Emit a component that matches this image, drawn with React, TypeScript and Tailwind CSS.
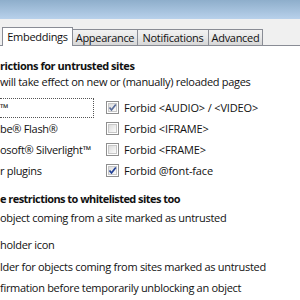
import React from 'react'

type BoxProps = {
    checked?: boolean
    tone?: string
}

const Box = ({ checked, tone = '#2b4c9a' }: BoxProps) => (
    <span className="relative inline-flex h-[13px] w-[13px] shrink-0 border border-[#8f8f8f] bg-white p-px">
        <span className="h-full w-full border border-[#c8c8c8] bg-gradient-to-br from-[#dcdcdc] to-[#fbfbfb]" />
        {checked && (
            <svg className="absolute left-[1px] top-[1px]" width="9" height="9" viewBox="0 0 9 9">
                <path d="M1.5 4.5 L3.5 7 L7.8 1.5" fill="none" stroke={tone} strokeWidth="1.7" />
            </svg>
        )}
    </span>
)

const tabs = [
    { label: 'Embeddings', w: 'w-[71px]' },
    { label: 'Appearance', w: 'w-[65px]' },
    { label: 'Notifications', w: 'w-[71px]' },
    { label: 'Advanced', w: 'w-[54px]' },
]

const rows = [
    { left: '™', right: 'Forbid <AUDIO> / <VIDEO>', checked: true, tone: '#5a6d9a', focus: true },
    { left: 'be® Flash®', right: 'Forbid <IFRAME>', checked: false },
    { left: 'osoft® Silverlight™', right: 'Forbid <FRAME>', checked: false },
    { left: 'r plugins', right: 'Forbid @font-face', checked: true, tone: '#1f3f96' },
]

export default function App() {
    return (
        <div
            className="flex h-[300px] w-[300px] flex-col overflow-hidden bg-[#f0f0f0] text-[11px] leading-[16px] tracking-[-0.3px] text-[#111]"
            style={{ fontFamily: '"Segoe UI", "Open Sans", "Noto Sans", sans-serif' }}
        >
            <div className="h-[19px] shrink-0 bg-gradient-to-b from-[#8eaecb] to-[#b8d1eb]" />
            <div className="flex h-[26px] shrink-0 items-end pl-[2px]">
                {tabs.map((t, i) =>
                    i === 0 ? (
                        <div
                            key={t.label}
                            className={`relative z-10 -mb-px flex h-[19px] items-center justify-center border border-b-0 border-[#898c95] bg-white ${t.w}`}
                        >
                            {t.label}
                        </div>
                    ) : (
                        <div
                            key={t.label}
                            className={`flex h-[16px] items-center justify-center border border-l-0 border-b-0 border-[#898c95] bg-gradient-to-b from-[#f2f2f2] via-[#e8e8e8] to-[#d6d6d6] ${t.w}`}
                        >
                            {t.label}
                        </div>
                    )
                )}
            </div>
            <div className="flex-1 border-t border-[#898c95] bg-white pt-[12px]">
                <div className="font-bold tracking-[-0.45px]">rictions for untrusted sites</div>
                <div>will take effect on new or (manually) reloaded pages</div>
                <div className="mt-[7px] flex flex-col">
                    {rows.map((r) => (
                        <div key={r.right} className="flex h-[21px] items-center">
                            <div className="flex w-[106px] shrink-0 items-center">
                                <span
                                    className={
                                        r.focus
                                            ? 'flex h-[20px] w-[94px] items-center border border-l-0 border-dotted border-[#555]'
                                            : 'flex h-[20px] items-center'
                                    }
                                >
                                    {r.left}
                                </span>
                            </div>
                            <Box checked={r.checked} tone={r.tone} />
                            <span className="ml-[5px] tracking-[-0.15px]">{r.right}</span>
                        </div>
                    ))}
                </div>
                <div className="mt-[10px] font-bold tracking-[-0.55px]">e restrictions to whitelisted sites too</div>
                <div className="mt-[3px]">object coming from a site marked as untrusted</div>
                <div className="mt-[11px]">holder icon</div>
                <div className="mt-[6px]">lder for objects coming from sites marked as untrusted</div>
                <div className="mt-[5px]">firmation before temporarily unblocking an object</div>
            </div>
        </div>
    )
}
